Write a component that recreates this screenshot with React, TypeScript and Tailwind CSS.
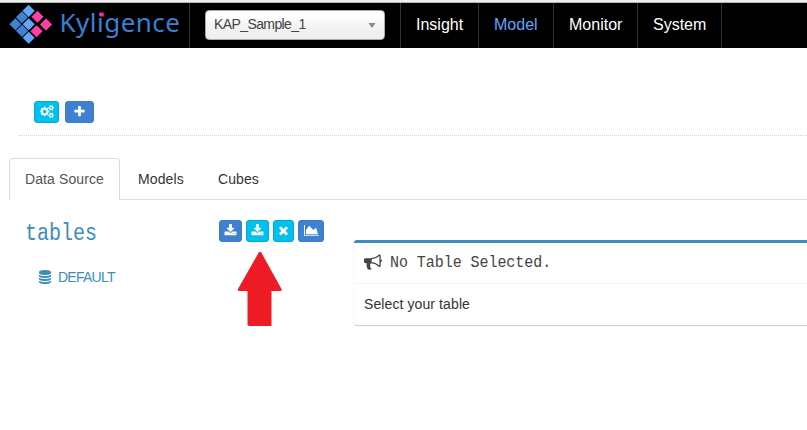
import type { ReactNode } from "react";

const GEARS =
  "M832 896q0-106-75-181t-181-75-181 75-75 181 75 181 181 75 181-75 75-181zm768 512q0-52-38-90t-90-38-90 38-38 90q0 53 37.5 90.5t90.5 37.5 90.5-37.5 37.5-90.5zm0-1024q0-52-38-90t-90-38-90 38-38 90q0 53 37.5 90.5t90.5 37.5 90.5-37.5 37.5-90.5zm-384 421v185q0 10-7 19.5t-16 10.5l-155 24q-11 35-32 76 34 48 90 115 7 11 7 20 0 12-7 19-23 30-82.5 89.5t-78.5 59.5q-11 0-21-7l-115-90q-37 19-77 31-11 108-23 155-7 24-30 24h-186q-11 0-20-7.5t-10-17.5l-23-153q-34-10-75-31l-118 89q-7 7-20 7-11 0-21-8-144-133-144-160 0-9 7-19 10-14 41-53t47-61q-23-44-35-82l-152-24q-10-1-17-9.5t-7-19.5v-185q0-10 7-19.5t16-10.5l155-24q11-35 32-76-34-48-90-115-7-11-7-20 0-12 7-20 22-30 82-89t79-59q11 0 21 7l115 90q34-18 77-32 11-108 23-154 7-24 30-24h186q11 0 20 7.5t10 17.5l23 153q34 10 75 31l118-89q8-7 20-7 11 0 21 8 144 133 144 160 0 8-7 19-12 16-42 54t-45 60q23 48 34 82l152 23q10 2 17 10.5t7 19.5zm640 533v140q0 16-149 31-12 27-30 52 51 113 51 138 0 4-4 7-122 71-124 71-8 0-46-47t-52-68q-20 2-30 2t-30-2q-14 21-52 68t-46 47q-2 0-124-71-4-3-4-7 0-25 51-138-18-25-30-52-149-15-149-31v-140q0-16 149-31 13-29 30-52-51-113-51-138 0-4 4-7 4-2 35-20t59-34 30-16q8 0 46 46.5t52 67.5q20-2 30-2t30 2q51-71 92-112l6-2q4 0 124 70 4 3 4 7 0 25-51 138 17 23 30 52 149 15 149 31zm0-1024v140q0 16-149 31-12 27-30 52 51 113 51 138 0 4-4 7-122 71-124 71-8 0-46-47t-52-68q-20 2-30 2t-30-2q-14 21-52 68t-46 47q-2 0-124-71-4-3-4-7 0-25 51-138-18-25-30-52-149-15-149-31v-140q0-16 149-31 13-29 30-52-51-113-51-138 0-4 4-7 4-2 35-20t59-34 30-16q8 0 46 46.5t52 67.5q20-2 30-2t30 2q51-71 92-112l6-2q4 0 124 70 4 3 4 7 0 25-51 138 17 23 30 52 149 15 149 31z";
const PLUS =
  "M1600 736v192q0 40-28 68t-68 28h-416v416q0 40-28 68t-68 28h-192q-40 0-68-28t-28-68v-416h-416q-40 0-68-28t-28-68v-192q0-40 28-68t68-28h416v-416q0-40 28-68t68-28h192q40 0 68 28t28 68v416h416q40 0 68 28t28 68z";
const DOWNLOAD =
  "M1344 1344q0-26-19-45t-45-19-45 19-19 45 19 45 45 19 45-19 19-45zm256 0q0-26-19-45t-45-19-45 19-19 45 19 45 45 19 45-19 19-45zm128-224v320q0 40-28 68t-68 28h-1472q-40 0-68-28t-28-68v-320q0-40 28-68t68-28h465l135 136q58 56 136 56t136-56l136-136h464q40 0 68 28t28 68zm-325-569q17 41-14 70l-448 448q-18 19-45 19t-45-19l-448-448q-31-29-14-70 17-39 59-39h256v-448q0-26 19-45t45-19h256q26 0 45 19t19 45v448h256q42 0 59 39z";
const TIMES =
  "M1490 1322q0 40-28 68l-136 136q-28 28-68 28t-68-28l-294-294-294 294q-28 28-68 28t-68-28l-136-136q-28-28-28-68t28-68l294-294-294-294q-28-28-28-68t28-68l136-136q28-28 68-28t68 28l294 294 294-294q28-28 68-28t68 28l136 136q28 28 28 68t-28 68l-294 294 294 294q28 28 28 68z";
const AREA = "M2048 1536v128h-2048v-1536h128v1408h1920zm-384-1024l256 896h-1664v-576l448-576 576 576z";
const HORN =
  "M1664 640q53 0 90.5 37.5t37.5 90.5-37.5 90.5-90.5 37.5v384q0 52-38 90t-90 38q-417-347-812-380-58 19-91 66t-31 100.5 40 92.5q-20 33-23 65.5t6 58 33.5 55 48 50 61.5 50.5q-29 58-111.5 83t-168.5 11.5-132-55.5q-7-23-29.5-87.5t-32-94.5-23-89-15-101 3.5-98.5 22-110.5h-122q-66 0-113-47t-47-113v-192q0-66 47-113t113-47h480q435 0 896-384 52 0 90 38t38 90v384zm-128 604v-954q-394 302-768 343v270q377 42 768 341z";
const DATABASE =
  "M896 768q237 0 443-43t325-127v170q0 69-103 128t-280 93.5-385 34.5-385-34.5-280-93.5-103-128v-170q119 84 325 127t443 43zm0 768q237 0 443-43t325-127v170q0 69-103 128t-280 93.5-385 34.5-385-34.5-280-93.5-103-128v-170q119 84 325 127t443 43zm0-384q237 0 443-43t325-127v170q0 69-103 128t-280 93.5-385 34.5-385-34.5-280-93.5-103-128v-170q119 84 325 127t443 43zm0-1152q208 0 385 34.5t280 93.5 103 128v128q0 69-103 128t-280 93.5-385 34.5-385-34.5-280-93.5-103-128v-128q0-69 103-128t280-93.5 385-34.5z";

function Icon({ d, className, box = "0 0 1792 1792" }: { d: string; className: string; box?: string }) {
  return (
    <svg viewBox={box} className={`shrink-0 fill-current ${className}`} aria-hidden="true">
      <path d={d} />
    </svg>
  );
}

function ToolButton({ tone, className, children }: { tone: "blue" | "cyan"; className: string; children: ReactNode }) {
  const color = tone === "blue" ? "border-[#3c7ccd] bg-[#4080d0]" : "border-[#00acd6] bg-[#00c0ef]";
  return (
    <button className={`flex h-[22px] items-center justify-center rounded-[3px] border pb-px text-white ${color} ${className}`}>
      {children}
    </button>
  );
}

const TILES: [number, number, string][] = [
  [28.6, 10.9, "#62a4f8"],
  [21.9, 17.3, "#4080d0"],
  [15.4, 24.2, "#4080d0"],
  [28.7, 24.2, "#62a4f8"],
  [22.1, 30.9, "#4080d0"],
  [28.7, 37.8, "#62a4f8"],
  [37.5, 16.8, "#ff3ea5"],
  [46, 24.5, "#ff3ea5"],
  [36.5, 31.3, "#ff3ea5"],
];

function Logo() {
  return (
    <svg width="189" height="45" viewBox="0 3 189 45" className="shrink-0">
      {TILES.map(([x, y, fill]) => (
        <rect key={`${x}-${y}`} x={x - 4.3} y={y - 4.3} width="8.6" height="8.6" rx="0.4" fill={fill} transform={`rotate(45 ${x} ${y})`} />
      ))}
      <text x="59.5" y="32.3" textLength="120.5" fontSize="26" className="fill-[#3c7fd0] font-['Noto_Sans',sans-serif]">
        Kyligence
      </text>
      <rect x="99.7" y="12.5" width="4" height="4" fill="#ff2a9b" />
    </svg>
  );
}

export default function App() {
  return (
    <div className="h-[430px] w-full overflow-hidden bg-white font-['Liberation_Sans',sans-serif] text-sm leading-5 text-[#333]">
      <div className="h-[3px] border-b border-[#b5b5b5] bg-[#eeeeee]" />
      <header className="flex h-[45px] bg-black">
        <Logo />
        <div className="flex w-[212px] border-x border-[#333] pt-[7px] pl-[15px]">
          <div className="flex h-[30px] w-[180px] items-center justify-between rounded-[4px] border border-[#aaa] bg-linear-to-b from-white from-20% via-[#f4f4f4] via-50% to-[#eeeeee] pr-2 pb-px pl-2 text-[#444]">
            <span className="-mt-px tracking-[-0.6px]">KAP_Sample_1</span>
            <svg width="8" height="5" viewBox="0 0 8 5" className="mt-px"><path d="M0.500 0h7L4 5z" fill="#888" /></svg>
          </div>
        </div>
        <nav className="flex text-base leading-[43px] text-white">
          <a className="w-[78px] border-r border-[#333] pl-[15px]">Insight</a>
          <a className="w-[75px] border-r border-[#333] pl-[15px] text-[#62a4f8]">Model</a>
          <a className="w-[84px] border-r border-[#333] pl-[15px]">Monitor</a>
          <a className="w-[84px] border-r border-[#333] pl-[15px]">System</a>
        </nav>
      </header>
      <div className="ml-[19px] flex h-[88px] gap-1.5 border-b border-dotted border-[#d5d5d5] pt-[53px] pl-[15px]">
        <ToolButton tone="cyan" className="w-[25px]"><Icon d={GEARS} className="h-[13px] w-[14px]" box="-64 0 1920 1792" /></ToolButton>
        <ToolButton tone="blue" className="w-[29px]"><Icon d={PLUS} className="size-[13px]" /></ToolButton>
      </div>
      <div className="mt-[22px] flex h-[42px] pl-[9px] leading-[41px] tracking-[0.1px]">
        <div className="w-[111px] rounded-t-[4px] border border-b-0 border-[#ddd] pl-[15px] text-[#555]">Data Source</div>
        <div className="flex grow border-b border-[#ddd] pt-px">
          <span className="w-20 pl-[18px]">Models</span>
          <span className="pl-[18px]">Cubes</span>
        </div>
      </div>
      <main className="flex">
        <aside className="w-[219px] pt-5 pl-[25px] text-[#3c8dbc]">
          <h3 className="h-[30px] origin-[0_20px] scale-y-115 font-['Liberation_Mono',monospace] text-[20px] leading-[30px]">tables</h3>
          <div className="mt-[17px] flex items-center gap-[6px] pl-[13px]">
            <Icon d={DATABASE} className="size-[14px]" />
            <span className="tracking-[-0.75px]">DEFAULT</span>
          </div>
        </aside>
        <div className="w-[135px] pt-5">
          <div className="flex gap-1">
            <ToolButton tone="blue" className="w-[23px]"><Icon d={DOWNLOAD} className="size-[13px]" /></ToolButton>
            <ToolButton tone="cyan" className="w-[23px]"><Icon d={DOWNLOAD} className="size-[13px]" /></ToolButton>
            <ToolButton tone="cyan" className="w-[21px]"><Icon d={TIMES} className="size-[13px]" /></ToolButton>
            <ToolButton tone="blue" className="w-[26px]"><Icon d={AREA} className="h-[13px] w-[15px]" box="0 0 2048 1792" /></ToolButton>
          </div>
          <svg width="44" height="75" viewBox="0 0 44 75" className="mt-[10px] ml-[18.5px]">
            <path d="M21 0h2L43.5 37v2H33.5V74H11L9.5 73V39H0v-2z" fill="#ed1c24" />
          </svg>
        </div>
        <section className="mt-10 h-[85px] grow rounded-tl-[3px] rounded-bl-[3px] border-t-[3px] border-[#3c8dbc] shadow-[0_1px_1px_rgba(0,0,0,0.2)]">
          <div className="flex h-[41px] items-center border-b border-[#f4f4f4] pl-[10px] text-[#444]">
            <Icon d={HORN} className="mb-[3px] size-[18px]" />
            <h3 className="mt-px ml-[8px] scale-y-115 font-['Liberation_Mono',monospace] text-[15px] tracking-[-0.05px]">No Table Selected.</h3>
          </div>
          <p className="pt-[10px] pl-[10px] tracking-[0.1px]">Select your table</p>
        </section>
      </main>
    </div>
  );
}
